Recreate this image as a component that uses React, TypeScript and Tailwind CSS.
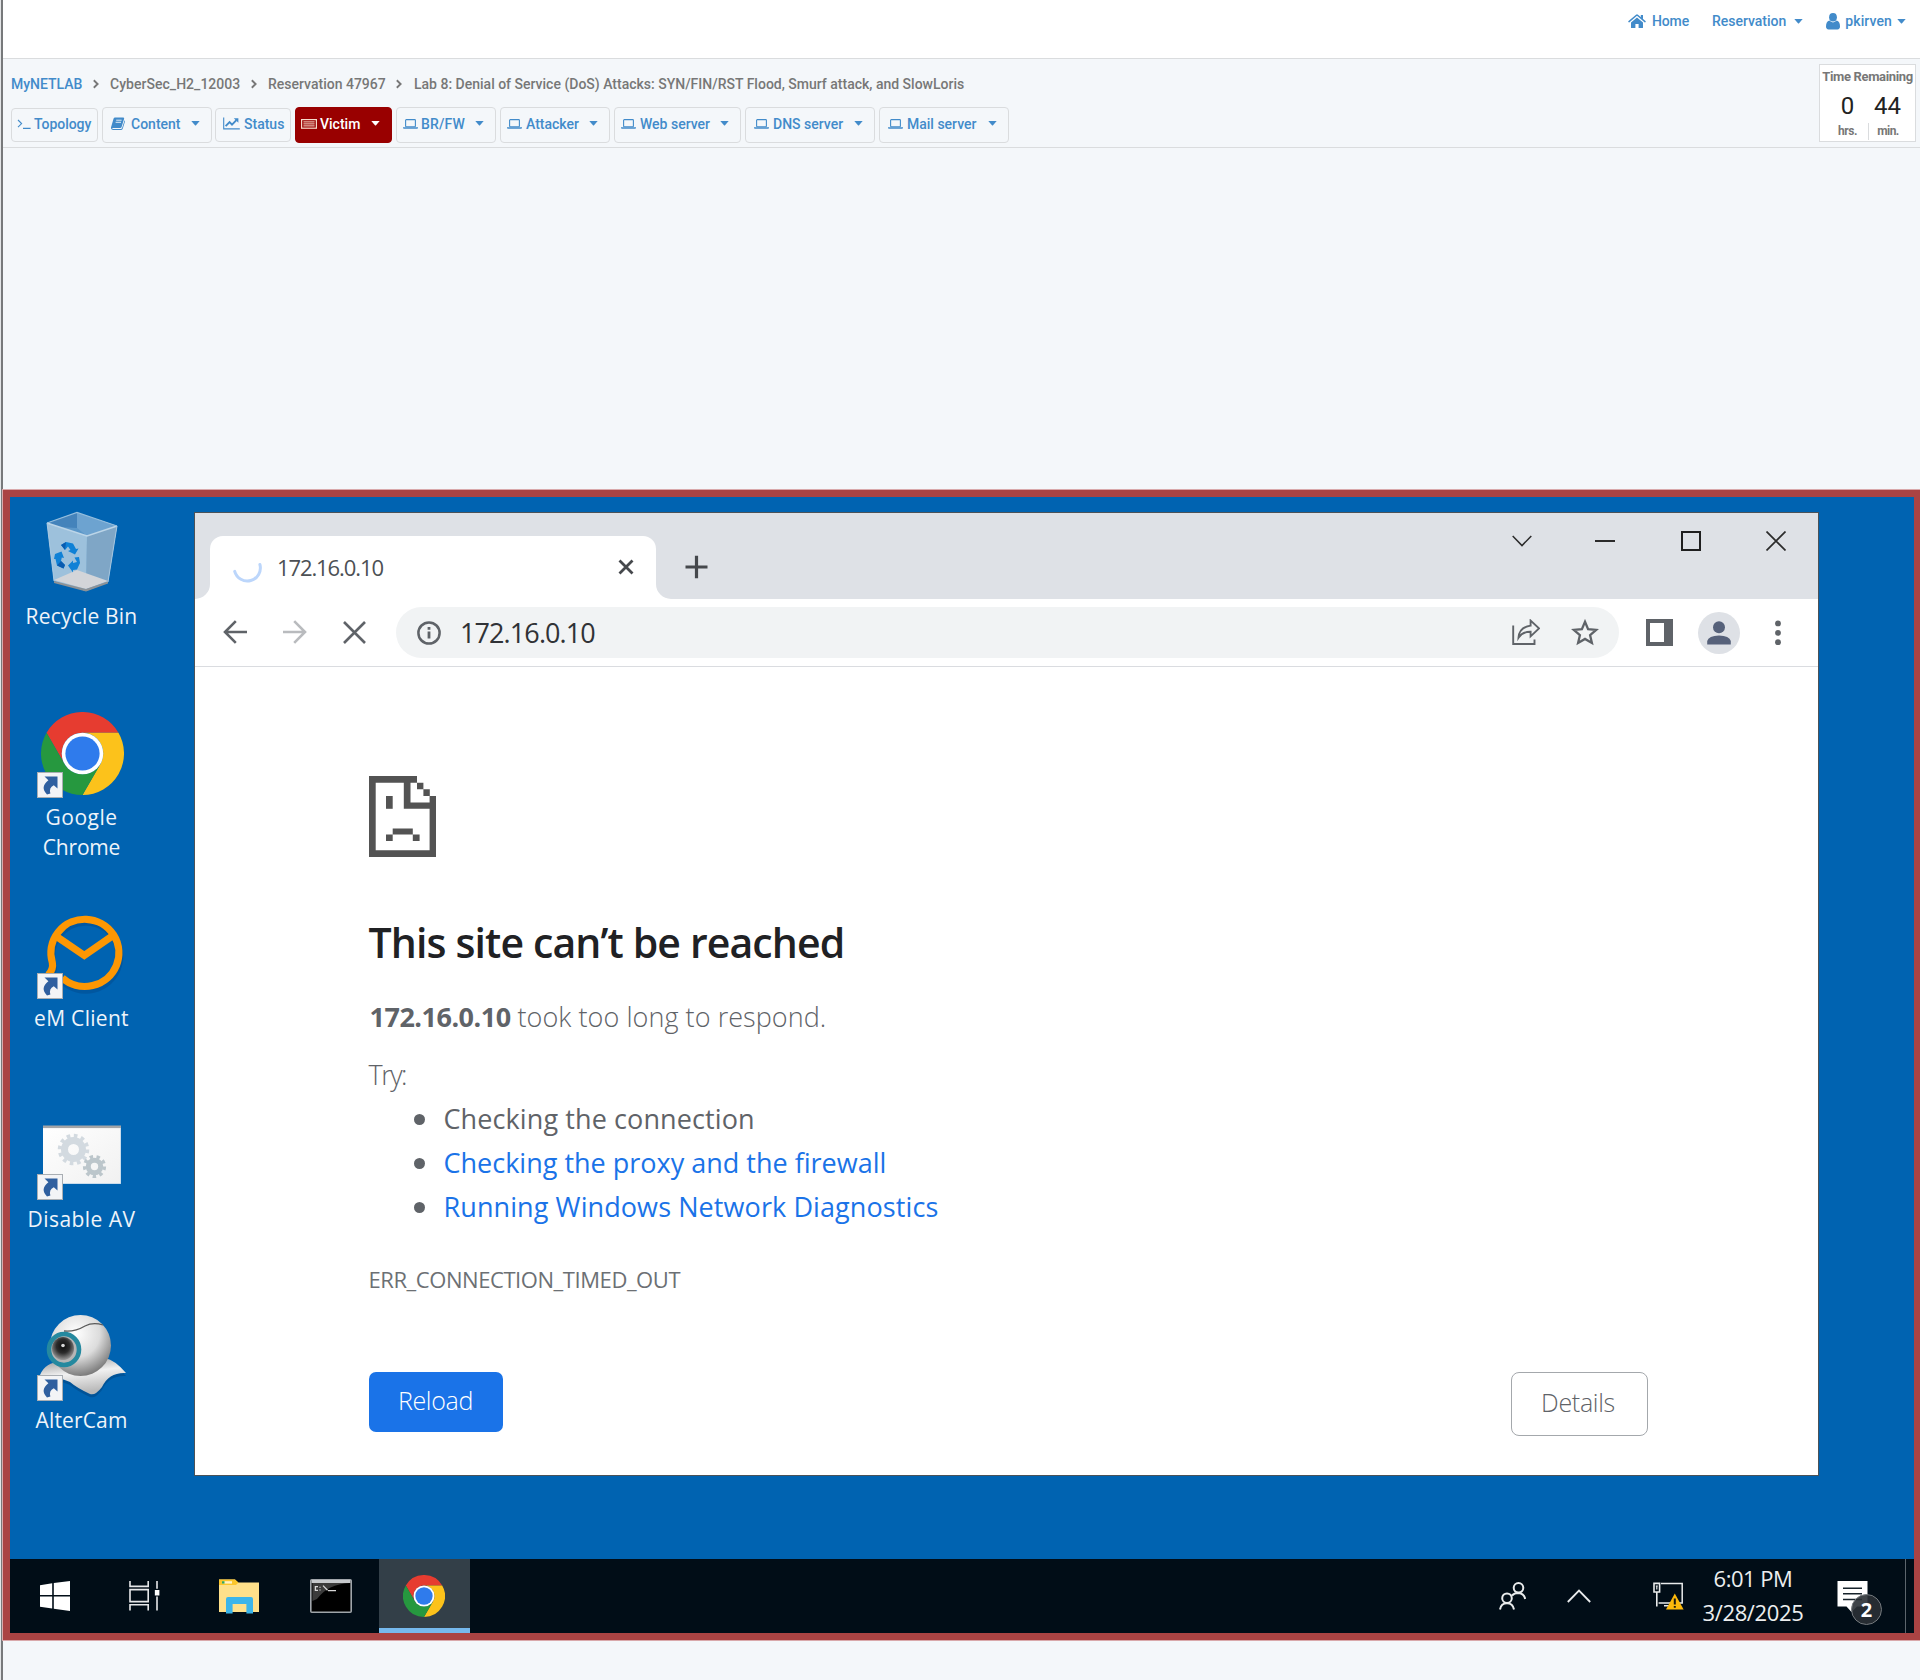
import React from "react";

/* ---------- page toolbar icons ---------- */

function Caret({ className = "" }: { className?: string }) {
  return (
    <svg width="9" height="5" viewBox="0 0 9 5" className={"shrink-0 " + className}>
      <path d="M0.3 0H8.7L4.8 4.4Q4.5 4.7 4.2 4.4Z" fill="currentColor" />
    </svg>
  );
}

function HomeIcon() {
  return (
    <svg width="18" height="15" viewBox="0 0 18 15" className="shrink-0" fill="currentColor">
      <path d="M9 3.6L15 8.6V13.4Q15 14 14.4 14H10.6V10H7.4V14H3.6Q3 14 3 13.4V8.6Z" />
      <path d="M1 7.6L8.5 1.3Q9 0.9 9.5 1.3L17 7.6" fill="none" stroke="currentColor" strokeWidth="1.5" strokeLinecap="round" />
      <path d="M12.8 1H15V5.4L12.8 3.5Z" />
    </svg>
  );
}

function UserIcon() {
  return (
    <svg width="14" height="17" viewBox="0 0 14 17" className="shrink-0" fill="currentColor">
      <ellipse cx="7" cy="4.3" rx="3.9" ry="4.3" />
      <path d="M3.3 7.6Q7 11.2 10.7 7.6Q14 8.6 14 13.6Q14 16.4 11.4 16.4H2.6Q0 16.4 0 13.6Q0 8.6 3.3 7.6Z" />
    </svg>
  );
}

function ChevronSep({ className = "" }: { className?: string }) {
  return (
    <svg width="8" height="10" viewBox="0 0 8 10" className={"shrink-0 " + className}>
      <path d="M1.8 1.3L5.6 5L1.8 8.7" fill="none" stroke="#777" strokeWidth="1.9" />
    </svg>
  );
}

function PromptIcon() {
  return (
    <svg width="14" height="12" viewBox="0 0 14 12" className="shrink-0" fill="none" stroke="currentColor" strokeWidth="1.1">
      <path d="M1 2L4.6 5.6L1 9.2M6 10.4H13.6" />
    </svg>
  );
}

function BookIcon() {
  return (
    <svg width="14" height="13" viewBox="0 0 14 13" className="shrink-0" fill="currentColor">
      <path d="M4 0.5H12.2Q13.4 0.6 13.1 1.8L10.6 10Q10.3 11 9.2 11H1.8Q1 11 1.3 11.5Q1.5 12 2.3 12H9.8Q10.8 12 11.1 11L13.6 3.2Q14.2 3.8 13.9 4.8L11.8 11.4Q11.3 12.9 9.8 12.9H2.1Q0.4 12.9 0 11.3Q-0.1 10.5 0.2 9.8L2.6 1.6Q3 0.5 4 0.5Z" />
      <path d="M5.2 3.2H10.6M4.6 5.3H10" stroke="#f4f7fa" strokeWidth="0.9" />
    </svg>
  );
}

function ChartIcon() {
  return (
    <svg width="17" height="13" viewBox="0 0 17 13" className="shrink-0" fill="none" stroke="currentColor">
      <path d="M0.7 0.5V11.9H16.8" strokeWidth="1.1" />
      <path d="M2.6 9.2L6.6 5.2L9 7.6L13.4 3.2" strokeWidth="1.9" />
      <path d="M10.8 1.2H15.4V5.8Z" fill="currentColor" stroke="none" />
    </svg>
  );
}

function LaptopIcon() {
  return (
    <svg width="15" height="10" viewBox="0 0 15 10" className="shrink-0">
      <rect x="2.6" y="0.6" width="9.8" height="7.2" rx="0.7" fill="none" stroke="currentColor" strokeWidth="1.1" />
      <path d="M0 8.3H15V9.1Q15 9.8 13.9 9.8H1.1Q0 9.8 0 9.1Z" fill="currentColor" />
    </svg>
  );
}

function KeyboardIcon() {
  return (
    <svg width="16" height="10" viewBox="0 0 16 10" className="shrink-0" fill="none" stroke="#f6dccb">
      <rect x="0.6" y="0.6" width="14.8" height="8.6" strokeWidth="1.2" />
      <path d="M2.4 2.9H13.6M2.4 4.9H13.6M2.4 6.9H13.6" strokeWidth="1" />
    </svg>
  );
}

function NavButton({ className, children }: { className: string; children: React.ReactNode }) {
  return (
    <button className={"flex shrink-0 items-center rounded-[4px] border pb-[3px] text-left leading-[20px] " + className}>{children}</button>
  );
}

const idle = "border-[#dadcde] text-[#428bca]";

/* ---------- desktop icons ---------- */

function ChromeLogo({ size }: { size: number }) {
  return (
    <svg width={size} height={size} viewBox="0 0 48 48" className="shrink-0">
      <path d="M13.61 30L3.21 12A24 24 0 0 1 44.79 12H24A12 12 0 0 0 13.61 30Z" fill="#e63c30" />
      <path d="M24 12H44.79A24 24 0 0 1 24 48L34.39 30A12 12 0 0 0 24 12Z" fill="#fcc21b" />
      <path d="M34.39 30L24 48A24 24 0 0 1 3.21 12L13.61 30A12 12 0 0 0 34.39 30Z" fill="#26983f" />
      <circle cx="24" cy="24" r="12" fill="#fff" />
      <circle cx="24" cy="24" r="9.9" fill="#2f7bec" />
    </svg>
  );
}

function Shortcut() {
  return (
    <svg width="26" height="26" viewBox="0 0 26 26" className="absolute left-0 top-[63px]">
      <rect x="0.5" y="0.5" width="25" height="25" fill="#f3f4f6" stroke="#a9aeb3" />
      <path d="M7.5 4.5H20.5V16.5L16.8 13.2Q11.6 15.6 13.4 21.6L10 22.4Q2.6 15 11.4 8.2Z" fill="#2f5f9f" />
    </svg>
  );
}

function RecycleBin() {
  return (
    <svg width="90" height="90" viewBox="0 0 90 90">
      <path d="M10 15L40 4.5L80 18L71 74.5L49 83L17 73Z" fill="#7fb0d6" />
      <path d="M10 15L50 28L49 83L17 73Z" fill="#9dc1dc" />
      <path d="M50 28L80 18L71 74.5L49 83Z" fill="#7fa6c6" />
      <path d="M10 15L40 4.5L80 18L50 28Z" fill="#5b97c9" />
      <path d="M40 4.5L40 20L50 28L80 18Z" fill="#6da3d0" />
      <path d="M10 15L40 4.5L40 20L22 19Z" fill="#4483bb" />
      <path d="M17 72L40 62L71 73L49 81Z" fill="#d3d5d9" />
      <path d="M17 73L49 81L71 73.5V75.5L49 83.5L17 75Z" fill="#8d9296" />
      <path d="M10 15L50 28L80 18" fill="none" stroke="#bcd5e8" strokeWidth="1.6" />
      <path d="M10 15L40 4.5L80 18" fill="none" stroke="#93bddd" strokeWidth="1.2" />
      <path d="M10 15L17 73M80 18L71 74" fill="none" stroke="#adcbe2" strokeWidth="0.9" />
      <g fill="#0f81d6">
        <path d="M24 37L29 34L36 35.5L39 41L41.5 40.5L38 46.5L31 43L33.5 42L31 38.5L28 42Z" />
        <path d="M18 46L24.5 43.5L27 50L24.8 49.5L24 53L28 57L26.5 60.5L20 57.5L18.5 51L17 51Z" />
        <path d="M31 57.5L36 52.5V55L40 54L37.5 49.5L42 49L43 55L40 61.5L36 62V64.5Z" />
      </g>
      <path d="M24 37L29 34L28 42ZM20 57.5L24 53L28 57L26.5 60.5Z" fill="#0a5cb0" />
    </svg>
  );
}

function EmClient() {
  return (
    <svg width="90" height="90" viewBox="0 0 90 90" fill="none" strokeLinejoin="miter">
      <g stroke="#004c90" strokeOpacity="0.5" strokeWidth="7" transform="translate(0 2.5)">
        <path d="M12 65Q17 59 16.5 54.5A34 34 0 1 1 26 69" />
      </g>
      <g stroke="#fd9703" strokeWidth="7.2" transform="translate(-0.7 0)">
        <path d="M12 65Q17.4 59 16 52.5A34 33.6 0 1 1 26 68" />
        <path d="M19.5 26L48 45.5L76 26" />
      </g>
    </svg>
  );
}

function DisableAv() {
  return (
    <svg width="90" height="90" viewBox="0 0 90 90">
      <defs>
        <linearGradient id="panel" x1="0" y1="0" x2="1" y2="1">
          <stop offset="0" stopColor="#ffffff" />
          <stop offset="1" stopColor="#f1f1f1" />
        </linearGradient>
      </defs>
      <rect x="6" y="15" width="78" height="57.5" fill="url(#panel)" />
      <rect x="6" y="14.5" width="78" height="2.6" fill="#a3a5a8" />
      <path d="M83.5 17V72.5H6.5" fill="none" stroke="#c9dcec" strokeWidth="1" />
      <circle cx="36.5" cy="38.5" r="9" fill="none" stroke="#d3dae0" strokeWidth="7" />
      <circle cx="36.5" cy="38.5" r="13.5" fill="none" stroke="#d3dae0" strokeWidth="4.5" strokeDasharray="3.53 3.53" />
      <circle cx="57.5" cy="55.5" r="6.2" fill="none" stroke="#bcc6cb" strokeWidth="5" />
      <circle cx="57.5" cy="55.5" r="9.8" fill="none" stroke="#bcc6cb" strokeWidth="3.6" strokeDasharray="3.42 3.42" />
    </svg>
  );
}

function AlterCam() {
  return (
    <svg width="90" height="90" viewBox="0 0 90 90">
      <defs>
        <radialGradient id="ball" cx="0.42" cy="0.3" r="0.72">
          <stop offset="0" stopColor="#ffffff" />
          <stop offset="0.55" stopColor="#dcdcdc" />
          <stop offset="1" stopColor="#777777" />
        </radialGradient>
        <linearGradient id="foot" x1="0" y1="0" x2="0.3" y2="1">
          <stop offset="0" stopColor="#8c8c8c" />
          <stop offset="0.5" stopColor="#f1f1f1" />
          <stop offset="1" stopColor="#b9b9b9" />
        </linearGradient>
        <radialGradient id="lens" cx="0.5" cy="0.4" r="0.6">
          <stop offset="0" stopColor="#0b0b0b" />
          <stop offset="0.5" stopColor="#2c2c2c" />
          <stop offset="1" stopColor="#9a9a9a" />
        </radialGradient>
      </defs>
      <path d="M2 66Q6 52 20 50L68 46Q78 48 89 61Q72 60 65 75Q58 84 53 82Q40 76 33 70Q15 62 2 66Z" fill="#003b73" opacity="0.4" transform="translate(0 3)" />
      <path d="M2 66Q6 52 20 50L68 46Q78 48 89 61Q72 60 65 75Q58 84 53 82Q40 76 33 70Q15 62 2 66Z" fill="url(#foot)" />
      <circle cx="43.5" cy="33.5" r="30.5" fill="url(#ball)" />
      <path d="M27 19Q38 20 48 14Q56 10 66 13" fill="none" stroke="#5a5a5a" strokeWidth="1.3" />
      <ellipse cx="27" cy="37.5" rx="15" ry="15.5" fill="#b5b5b5" stroke="#25899f" strokeWidth="4.6" />
      <ellipse cx="26" cy="36.5" rx="11" ry="11.5" fill="url(#lens)" />
      <circle cx="26" cy="33.5" r="1.8" fill="#d8d8d8" />
    </svg>
  );
}

function DesktopIcon({ icon, shortcut = true, children }: { icon: React.ReactNode; shortcut?: boolean; children: React.ReactNode }) {
  return (
    <div className="flex h-[201px] w-[144px] flex-col items-center">
      <div className="relative h-[90px] w-[90px]">
        {icon}
        {shortcut && <Shortcut />}
      </div>
      <div className="mt-[3px] w-full pr-px text-center text-[21px] leading-[30px] text-[#eef4fa]">{children}</div>
    </div>
  );
}

/* ---------- browser window ---------- */

function TabFoot({ flip = false }: { flip?: boolean }) {
  return (
    <svg width="15" height="15" viewBox="0 0 15 15" className={flip ? "absolute -right-[15px] bottom-0 -scale-x-100" : "absolute -left-[15px] bottom-0"}>
      <path d="M15 0V15H0A15 15 0 0 0 15 0Z" fill="#fff" />
    </svg>
  );
}

function Browser() {
  return (
    <div className="absolute left-[184px] top-[15px] flex h-[964px] w-[1625px] flex-col border border-[#4b5258] bg-white">
      <div className="flex h-[86px] shrink-0 bg-[#dee1e6] pl-[15px] pr-[32px]">
        <div className="relative mt-[23px] flex h-[63px] w-[446px] items-center rounded-t-[13px] bg-white pl-[22px]">
          <TabFoot />
          <TabFoot flip />
          <svg width="32" height="32" viewBox="0 0 32 32" fill="none" className="shrink-0">
            <path d="M2.7 19.4A13 13 0 1 0 27.9 12.5" stroke="#bcd6fb" strokeWidth="3" strokeLinecap="round" />
          </svg>
          <span className="mb-[2px] ml-[13px] text-[22px] leading-[30px] tracking-[-1.1px] text-[#4c5054]">172.16.0.10</span>
          <svg width="16" height="16" viewBox="0 0 16 16" className="mb-px ml-auto mr-[22px] shrink-0">
            <path d="M1.5 1.5L14.5 14.5M14.5 1.5L1.5 14.5" stroke="#45484c" strokeWidth="2.8" />
          </svg>
        </div>
        <svg width="24" height="24" viewBox="0 0 24 24" className="ml-[29px] mt-[42px] shrink-0">
          <path d="M11.5 0.8V23.2M0.5 12H22.5" stroke="#45484c" strokeWidth="3.2" />
        </svg>
        <div className="ml-auto mt-[17px] flex h-[22px] items-center text-[#2b2b2b]">
          <svg width="20" height="12" viewBox="0 0 20 12" fill="none">
            <path d="M0.7 0.9L10 10.6L19.3 0.9" stroke="currentColor" strokeWidth="1.5" />
          </svg>
          <span className="ml-[63px] h-[2px] w-[20px] bg-[#2b2b2b]" />
          <span className="ml-[66px] h-[20px] w-[20px] border-2 border-[#1f1f1f]" />
          <svg width="20" height="20" viewBox="0 0 20 20" className="ml-[65px]">
            <path d="M0.5 0.5L19.5 19.5M19.5 0.5L0.5 19.5" stroke="currentColor" strokeWidth="1.7" />
          </svg>
        </div>
      </div>

      <div className="flex h-[68px] shrink-0 items-center border-b border-[#dadce0] pl-[28px] text-[#5f6368]">
        <svg width="24" height="24" viewBox="0 0 24 24" fill="none" stroke="currentColor" strokeWidth="2.6" className="mb-[2px] shrink-0">
          <path d="M24 12H2M12.8 1.2L2 12L12.8 22.8" />
        </svg>
        <svg width="24" height="24" viewBox="0 0 24 24" fill="none" stroke="#b9bbbe" strokeWidth="2.6" className="mb-[2px] ml-[36px] shrink-0">
          <path d="M0 12H22M11.2 1.2L22 12L11.2 22.8" />
        </svg>
        <svg width="23" height="23" viewBox="0 0 23 23" fill="none" stroke="currentColor" strokeWidth="2.6" className="ml-[36px] shrink-0">
          <path d="M1 1L22 22M22 1L1 22" />
        </svg>
        <div className="ml-[30px] flex h-[51px] w-[1223px] items-center rounded-full bg-[#f1f3f4] pl-[21px] pr-[20px]">
          <svg width="24" height="24" viewBox="0 0 24 24" fill="none" className="shrink-0">
            <circle cx="12" cy="12" r="10.6" stroke="currentColor" strokeWidth="2.5" />
            <path d="M12 10.4V17.6M12 6V8.7" stroke="currentColor" strokeWidth="2.8" />
          </svg>
          <span className="ml-[19px] text-[27px] leading-[36px] tracking-[-0.9px] text-[#303236]">172.16.0.10</span>
          <svg width="28" height="27" viewBox="0 0 28 27" fill="none" stroke="currentColor" strokeWidth="1.9" className="ml-auto shrink-0">
            <path d="M1.2 6.5V25H22.5V20.5" />
            <path d="M6.5 18.8Q7.2 8.2 18.6 6.6V1.6L27 9.4L18.6 17.4V12.8Q10.6 12.6 6.5 18.8Z" />
          </svg>
          <svg width="28" height="27" viewBox="0 0 28 27" fill="none" stroke="currentColor" strokeWidth="2.3" className="ml-[31px] shrink-0">
            <path d="M14 2.8L17.1 10.2L25.2 10.9L19.1 16.2L20.9 24L14 19.9L7.1 24L8.9 16.2L2.8 10.9L10.9 10.2Z" />
          </svg>
        </div>
        <svg width="27" height="27" viewBox="0 0 27 27" className="ml-[27px] shrink-0">
          <path d="M0 0H27V27H0ZM4 4V23H18V4Z" fill="currentColor" fillRule="evenodd" />
        </svg>
        <span className="ml-[25px] flex h-[42px] w-[42px] shrink-0 items-center justify-center rounded-full bg-[#dee1e6]">
          <svg width="24" height="24" viewBox="0 0 24 24" fill="#56617a">
            <circle cx="12" cy="6.2" r="6" />
            <path d="M0.2 23.5V20Q1.6 14.6 12 14.4Q22.4 14.6 23.8 20V23.5Z" />
          </svg>
        </span>
        <svg width="6" height="26" viewBox="0 0 6 26" className="ml-[35px] shrink-0" fill="currentColor">
          <circle cx="3" cy="3.4" r="2.9" />
          <circle cx="3" cy="12.8" r="2.9" />
          <circle cx="3" cy="22.2" r="2.9" />
        </svg>
      </div>

      <div className="flex flex-col pl-[173.5px] pr-[170.5px] pt-[109px] text-[27px] text-[#5f6368]">
        <svg width="67" height="81" viewBox="0 0 67 81" fill="#535353">
          <path d="M0 0H48V6.7H6.7V74.3H60.6V20H67V81H0Z" />
          <path d="M34.8 6H41.5V26.5H61V32.8H34.8Z" />
          <path d="M48 6.7H54.4V13.3H48ZM54.4 13.3H60.8V20H54.4Z" />
          <path d="M17 20H23.7V32.8H17Z" />
          <path d="M23.7 52.4H43.8V58.6H23.7ZM17 58.6H23.7V65H17ZM43.8 58.6H50.6V65H43.8Z" />
        </svg>
        <h1 className="mt-[60px] text-[41px] font-semibold leading-[50px] tracking-[-0.87px] text-[#202124]">This site can’t be reached</h1>
        <p className="mt-[32px] flex whitespace-pre leading-[36px]">
          <strong className="w-[148px] pl-px font-bold tracking-[-0.5px]">172.16.0.10</strong>
          <span className="pl-px font-light tracking-[0.05px]">took too long to respond.</span>
        </p>
        <p className="mt-[22px] font-light leading-[36px] tracking-[-1.5px]">Try:</p>
        <ul className="mt-[4px] leading-[44px]">
          <li className="flex items-center">
            <span className="ml-[45px] mt-px h-[11px] w-[11px] rounded-full bg-[#5f6368]" />
            <span className="ml-[19px] tracking-[0.1px]">Checking the connection</span>
          </li>
          <li className="flex items-center text-[#1a73e8]">
            <span className="ml-[45px] mt-px h-[11px] w-[11px] rounded-full bg-[#5f6368]" />
            <span className="ml-[19px]">Checking the proxy and the firewall</span>
          </li>
          <li className="flex items-center text-[#1a73e8]">
            <span className="ml-[45px] mt-px h-[11px] w-[11px] rounded-full bg-[#5f6368]" />
            <span className="ml-[19px] tracking-[0.09px]">Running Windows Network Diagnostics</span>
          </li>
        </ul>
        <p className="mt-[35px] text-[22px] leading-[30px] tracking-[-0.43px] text-[#6c7074]">ERR_CONNECTION_TIMED_OUT</p>
        <div className="mt-[78px] flex items-start justify-between text-[25px] font-light">
          <button className="h-[60px] w-[134px] rounded-[7px] bg-[#1a73e8] pb-[2px] tracking-[-0.3px] text-white">Reload</button>
          <button className="h-[64px] w-[137px] rounded-[8px] border-[1.5px] border-[#a4a8ac] pb-[3px] pr-[2px] tracking-[-0.3px]">Details</button>
        </div>
      </div>
    </div>
  );
}

/* ---------- taskbar ---------- */

function Taskbar() {
  return (
    <div className="flex h-[74px] items-center bg-[#010d17] pl-[30px] pr-[8px] text-white">
      <svg width="30" height="30" viewBox="0 0 30 30" fill="#fff" className="shrink-0">
        <path d="M0 4.2L12.2 2.2V14H0ZM13.8 2L30 0V14H13.8ZM0 15.6H12.2V27.6L0 25.8ZM13.8 15.6H30V30L13.8 27.8Z" />
      </svg>
      <svg width="31" height="30" viewBox="0 0 31 30" fill="none" stroke="#e6e8ea" strokeWidth="1.6" className="ml-[59px] shrink-0">
        <path d="M1 0V5.4H19.2V0M1 29.5V23.8H19.2V29.5M1 8.6H19.2V20.6H1ZM28 0V29.5" />
        <path d="M25.2 8.4H31V15H25.2Z" fill="#fff" stroke="#010d17" strokeWidth="1.2" />
      </svg>
      <svg width="42" height="35" viewBox="0 0 42 35" className="ml-[58px] shrink-0">
        <path d="M1 0.5H17L20 3.5H41V33H1Z" fill="#ffe08a" />
        <path d="M1 0.5H17L20.5 3.6L18 6H1Z" fill="#fbc62c" />
        <path d="M4 2.2H14V4.6H4Z" fill="#fff3c8" />
        <path d="M4 2.2H6.5V4.6H4Z" fill="#3aa757" />
        <path d="M8 20Q8 18 10 18H33Q35 18 35 20V34.5H28.4V25H14.6V34.5H8Z" fill="#3cb5ea" />
      </svg>
      <svg width="42" height="34" viewBox="0 0 42 34" className="ml-[49.5px] shrink-0">
        <rect x="0.8" y="0.8" width="40.4" height="32.4" rx="1" fill="#000" stroke="#a0a5aa" strokeWidth="1.6" />
        <path d="M1.6 1H40.4V4H1.6Z" fill="#c7cacd" />
        <path d="M2.4 4H39.6Q18 5 7 20L2.4 22Z" fill="#4a4a4a" opacity="0.8" />
        <path d="M8 7.6H5.4V11.4H8M10 7.8V8.8M10 10.4V11.4M13 6.6L17.5 11.2M18 11.6H26" fill="none" stroke="#d8d8d8" strokeWidth="1.3" />
      </svg>
      <div className="ml-[27.5px] flex h-full w-[91px] shrink-0 items-center justify-center border-b-[5px] border-[#76b9ed] bg-[#333f48] pr-[2px] pt-[4px]">
        <ChromeLogo size={42} />
      </div>

      <svg width="27" height="28" viewBox="0 0 27 28" fill="none" stroke="#e9ebec" strokeWidth="2" className="ml-auto shrink-0">
        <circle cx="19.5" cy="5.8" r="4.8" />
        <circle cx="8" cy="16.2" r="4.8" />
        <path d="M1 27.5Q2 21.2 8 21.2Q13.8 21.2 15 27.5M13 13.6Q15 10.9 19.5 10.9Q25 11.2 26.2 17" />
      </svg>
      <svg width="24" height="14" viewBox="0 0 24 14" fill="none" className="ml-[41px] shrink-0">
        <path d="M0.8 13L12 1.6L23.2 13" stroke="#e9ebec" strokeWidth="1.8" />
      </svg>
      <svg width="31" height="28" viewBox="0 0 31 28" fill="none" stroke="#e9ebec" className="ml-[62px] shrink-0">
        <path d="M8 1.4H29.2V21H5.6" strokeWidth="1.5" />
        <path d="M1 1.4H6.6V10H1ZM3.8 10V24.5M11 23.8H18" strokeWidth="1.6" />
        <path d="M2.8 4H4.8M3.8 4V7.5" strokeWidth="1.2" />
        <path d="M21.8 11.5L30.6 27.6H13Z" fill="#fdb90b" stroke="none" />
        <path d="M21.8 16.6V22.6M21.8 24V25.8" stroke="#1d1a0e" strokeWidth="2" />
      </svg>
      <div className="ml-[14px] w-[110px] shrink-0 pb-[2px] text-center text-[22px] leading-[34px] text-[#eceeef]">
        <div className="tracking-[-0.5px]">6:01 PM</div>
        <div className="tracking-[-0.35px]">3/28/2025</div>
      </div>
      <div className="relative ml-[29px] h-[46px] w-[45px] shrink-0">
        <svg width="31" height="31" viewBox="0 0 31 31" className="mt-[8px]">
          <path d="M0.5 0H30.5V25.5H20L14.5 31L9.5 25.5H0.5Z" fill="#fff" />
          <path d="M6 7.2H25M6 12.8H25M6 18.4H25" stroke="#16222b" strokeWidth="1.5" />
        </svg>
        <span className="absolute left-[14px] top-[21px] flex h-[31px] w-[31px] items-center justify-center rounded-full border-[1.5px] border-[#74797d] bg-[#2a3035]/90 text-[20px] font-bold leading-none">
          2
        </span>
      </div>
      <span className="ml-[23px] h-full w-px bg-[#5c656c]" />
    </div>
  );
}

/* ---------- page ---------- */

export default function App() {
  return (
    <div className="flex h-[1680px] w-[1920px] overflow-hidden bg-[#f4f7fa]">
      <div className="w-[3px] shrink-0 border-l border-[#e3e5e7] bg-[#77797b]" />
      <div className="flex w-[1917px] flex-col font-['Roboto',sans-serif] text-[14px] font-medium">
        <header className="h-[59px] shrink-0 border-b border-[#dadcde] bg-white">
          <nav className="flex h-[42px] items-center justify-end pr-[14px] leading-[20px] text-[#428bca]">
            <HomeIcon />
            <a className="ml-[6px] w-[60px] tracking-[-0.1px]">Home</a>
            <a>Reservation</a>
            <Caret className="ml-[8px]" />
            <span className="w-[23px]" />
            <UserIcon />
            <a className="ml-[5px] tracking-[0.1px]">pkirven</a>
            <Caret className="ml-[5px]" />
          </nav>
        </header>

        <section className="flex h-[89px] shrink-0 justify-between border-b border-[#dadcde] pr-[4px]">
          <div className="pl-[8px] pt-[15px]">
            <div className="flex h-[20px] items-center whitespace-nowrap leading-[20px] text-[#777]">
              <a className="w-[81px] text-[#428bca]">MyNETLAB</a>
              <ChevronSep />
              <a className="ml-[10px] w-[140px] tracking-[0.03px]">CyberSec_H2_12003</a>
              <ChevronSep />
              <a className="ml-[10px] w-[127px]">Reservation 47967</a>
              <ChevronSep />
              <span className="ml-[11px]">Lab 8: Denial of Service (DoS) Attacks: SYN/FIN/RST Flood, Smurf attack, and SlowLoris</span>
            </div>
            <div className="mt-[13px] flex h-[36px] items-center">
              <NavButton className={"mr-[4px] h-[34px] w-[87px] pl-[5px] " + idle}>
                <PromptIcon />
                <span className="ml-[3px] tracking-[-0.05px]">Topology</span>
              </NavButton>
              <NavButton className={"mr-[3px] h-[36px] w-[110px] pl-[8px] pr-[11px] " + idle}>
                <BookIcon />
                <span className="ml-[6px]">Content</span>
                <Caret className="ml-auto" />
              </NavButton>
              <NavButton className={"mr-[4px] h-[34px] w-[76px] pl-[7px] " + idle}>
                <ChartIcon />
                <span className="ml-[4px]">Status</span>
              </NavButton>
              <NavButton className="mr-[4px] h-[36px] w-[97px] border-[#990000] bg-[#990000] pl-[5px] pr-[11px] text-white">
                <KeyboardIcon />
                <span className="ml-[3px]">Victim</span>
                <Caret className="ml-auto" />
              </NavButton>
              <NavButton className={"mr-[4px] h-[36px] w-[100px] pl-[6px] pr-[11px] " + idle}>
                <LaptopIcon />
                <span className="ml-[3px] tracking-[0.15px]">BR/FW</span>
                <Caret className="ml-auto" />
              </NavButton>
              <NavButton className={"mr-[4px] h-[36px] w-[110px] pl-[6px] pr-[11px] " + idle}>
                <LaptopIcon />
                <span className="ml-[4px]">Attacker</span>
                <Caret className="ml-auto" />
              </NavButton>
              <NavButton className={"mr-[4px] h-[36px] w-[127px] pl-[6px] pr-[11px] " + idle}>
                <LaptopIcon />
                <span className="ml-[4px]">Web server</span>
                <Caret className="ml-auto" />
              </NavButton>
              <NavButton className={"mr-[4px] h-[36px] w-[130px] pl-[8px] pr-[11px] " + idle}>
                <LaptopIcon />
                <span className="ml-[4px]">DNS server</span>
                <Caret className="ml-auto" />
              </NavButton>
              <NavButton className={"h-[36px] w-[130px] pl-[8px] pr-[11px] " + idle}>
                <LaptopIcon />
                <span className="ml-[4px]">Mail server</span>
                <Caret className="ml-auto" />
              </NavButton>
            </div>
          </div>

          <div className="mt-[5px] flex h-[78px] w-[97px] flex-col items-center border border-[#dadcde] bg-white font-bold text-[#777]">
            <div className="mt-[2px] whitespace-nowrap text-[13px] leading-[20px] tracking-[-0.35px]">Time Remaining</div>
            <div className="mt-[5px] flex text-[24px] font-normal leading-[28px] text-[#222]">
              <span className="w-[40px] pl-[8px] text-center">0</span>
              <span className="w-[48px] pl-[2px] pr-[2px] text-center">44</span>
            </div>
            <div className="mt-[3px] flex h-[17px] text-[12px] leading-[17px]">
              <span className="w-[43px] border-r border-[#dadcde] pl-[2px] text-center tracking-[-0.5px]">hrs.</span>
              <span className="w-[41px] pr-[2px] text-center tracking-[-0.6px]">min.</span>
            </div>
          </div>
        </section>

        <main className="mt-[342px] h-[1150px] shrink-0 border-[7px] border-r-[6px] border-[#aa4343] bg-[#0063b1] font-['Open_Sans','Noto_Sans',sans-serif] font-normal shadow-[0_0_0_1px_#d9a9ab]">
          <div className="relative flex h-full flex-col justify-between">
            <div className="h-[1062px] pt-[11px]">
              <DesktopIcon icon={<RecycleBin />} shortcut={false}>
                <span className="tracking-[0.2px]">Recycle Bin</span>
              </DesktopIcon>
              <DesktopIcon icon={<span className="flex justify-center pt-[3px]"><ChromeLogo size={83} /></span>}>
                <div className="tracking-[0.5px]">Google</div>
                <div className="tracking-[-0.2px]">Chrome</div>
              </DesktopIcon>
              <DesktopIcon icon={<EmClient />}>
                <span className="tracking-[0.3px]">eM Client</span>
              </DesktopIcon>
              <DesktopIcon icon={<DisableAv />}>
                <span className="tracking-[0.45px]">Disable AV</span>
              </DesktopIcon>
              <DesktopIcon icon={<AlterCam />}>
                <span className="tracking-[0.15px]">AlterCam</span>
              </DesktopIcon>
            </div>
            <Browser />
            <Taskbar />
          </div>
        </main>
      </div>
    </div>
  );
}
